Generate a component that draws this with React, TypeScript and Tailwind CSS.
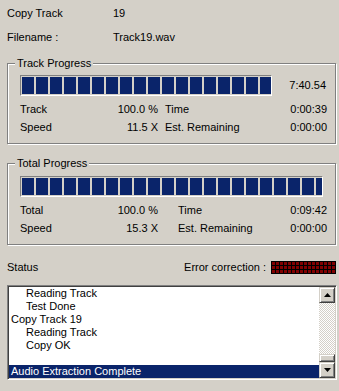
import React from "react";

/** Classic Windows ripper progress dialog: two group boxes, status line and log list. */

const LOG: { text: string; indent: boolean }[] = [
  { text: "Reading Track", indent: true },
  { text: "Test Done", indent: true },
  { text: "Copy Track 19", indent: false },
  { text: "Reading Track", indent: true },
  { text: "Copy OK", indent: true },
  { text: "", indent: false },
];

function ProgressBar({ blocks, className }: { blocks: number; className: string }) {
  return (
    <div
      className={`flex h-[21px] gap-[2px] overflow-hidden border border-[#808080] border-r-white border-b-white p-[1px] ${className}`}
    >
      {Array.from({ length: blocks }).map((_, i) => (
        <span key={i} className="h-full w-[12px] shrink-0 bg-[#0a246a]" />
      ))}
    </div>
  );
}

function GroupBox({
  title,
  className,
  children,
}: {
  title: string;
  className: string;
  children: React.ReactNode;
}) {
  return (
    <div
      className={`relative mx-[7px] w-[329px] border border-[#808080] shadow-[inset_1px_1px_#fff,1px_1px_#fff] ${className}`}
    >
      <span className="absolute -top-[8px] left-[7px] bg-[#d4d0c8] px-[2px] leading-[14px]">
        {title}
      </span>
      {children}
    </div>
  );
}

function StatRow({
  label,
  value,
  label2,
  value2,
  offset,
}: {
  label: string;
  value: string;
  label2: string;
  value2: string;
  offset: string;
}) {
  return (
    <div className="flex h-[18px] items-center pl-[12px] pr-[8px]">
      <div className="flex w-[138px] justify-between">
        <span>{label}</span>
        <span>{value}</span>
      </div>
      <div className={`flex flex-1 justify-between ${offset}`}>
        <span>{label2}</span>
        <span>{value2}</span>
      </div>
    </div>
  );
}

function ErrorMeter() {
  const cols = 16;
  const rows = 3;
  return (
    <svg width="65" height="13" viewBox="0 0 65 13" className="block">
      <rect width="65" height="13" fill="#000" />
      {Array.from({ length: rows }).map((_, r) =>
        Array.from({ length: cols }).map((_, c) => (
          <rect key={`${r}-${c}`} x={1 + c * 4} y={1 + r * 4} width="3" height="3" fill="#800000" />
        )),
      )}
    </svg>
  );
}

function ScrollButton({ dir }: { dir: "up" | "down" }) {
  return (
    <div className="grid h-[16px] w-[16px] place-items-center border border-[#d4d0c8] border-r-[#404040] border-b-[#404040] bg-[#d4d0c8] shadow-[inset_1px_1px_#fff,inset_-1px_-1px_#808080]">
      <svg width="7" height="4" viewBox="0 0 7 4" className="block">
        {dir === "up" ? (
          <polygon points="3.5,0 7,4 0,4" fill="#000" />
        ) : (
          <polygon points="0,0 7,0 3.5,4" fill="#000" />
        )}
      </svg>
    </div>
  );
}

export default function App() {
  return (
    <div className="h-[391px] w-[339px] overflow-hidden bg-[#d4d0c8] pt-[1px] font-['Liberation_Sans',Arial,sans-serif] text-[11px] text-black">
      <div className="flex h-[24px] items-center pl-[7px]">
        <span className="w-[106px]">Copy Track</span>
        <span>19</span>
      </div>
      <div className="flex h-[24px] items-center pl-[7px]">
        <span className="w-[106px]">Filename :</span>
        <span>Track19.wav</span>
      </div>

      <GroupBox title="Track Progress" className="mt-[14px] h-[81px] pt-[11px]">
        <div className="flex items-center pl-[12px] pr-[9px]">
          <ProgressBar blocks={18} className="w-[252px]" />
          <span className="ml-auto">7:40.54</span>
        </div>
        <div className="mt-[4px]">
          <StatRow label="Track" value="100.0 %" label2="Time" value2="0:00:39" offset="ml-[7px]" />
          <StatRow label="Speed" value="11.5 X" label2="Est. Remaining" value2="0:00:00" offset="ml-[7px]" />
        </div>
      </GroupBox>

      <GroupBox title="Total Progress" className="mt-[19px] h-[82px] pt-[12px]">
        <div className="flex items-center pl-[12px] pr-[10px]">
          <ProgressBar blocks={22} className="w-[303px]" />
        </div>
        <div className="mt-[4px]">
          <StatRow label="Total" value="100.0 %" label2="Time" value2="0:09:42" offset="ml-[20px]" />
          <StatRow label="Speed" value="15.3 X" label2="Est. Remaining" value2="0:00:00" offset="ml-[20px]" />
        </div>
      </GroupBox>

      <div className="mt-[15px] flex h-[14px] items-center pl-[7px] pr-[3px]">
        <span>Status</span>
        <span className="ml-auto">Error correction :</span>
        <span className="ml-[5px]">
          <ErrorMeter />
        </span>
      </div>

      <div className="mx-[7px] mt-[11px] flex h-[95px] w-[330px] border border-[#808080] border-r-white border-b-white bg-white shadow-[inset_1px_1px_#404040,inset_-1px_-1px_#d4d0c8] p-[1px]">
        <div className="flex-1 overflow-hidden">
          {LOG.map((row, i) => (
            <div
              key={i}
              className={`h-[13px] leading-[13px] whitespace-nowrap ${row.indent ? "pl-[17px]" : "pl-[2px]"}`}
            >
              {row.text}
            </div>
          ))}
          <div className="h-[13px] bg-[#0a246a] pl-[2px] leading-[13px] text-white">
            Audio Extraction Complete
          </div>
        </div>
        <div className="flex w-[16px] flex-col">
          <ScrollButton dir="up" />
          <div className="flex-1 bg-[conic-gradient(#fff_25%,#d4d0c8_0_50%,#fff_0_75%,#d4d0c8_0)] bg-[length:2px_2px]" />
          <div className="h-[8px] border border-[#d4d0c8] border-r-[#404040] border-b-[#404040] bg-[#d4d0c8] shadow-[inset_1px_1px_#fff,inset_-1px_-1px_#808080]" />
          <ScrollButton dir="down" />
        </div>
      </div>
    </div>
  );
}
